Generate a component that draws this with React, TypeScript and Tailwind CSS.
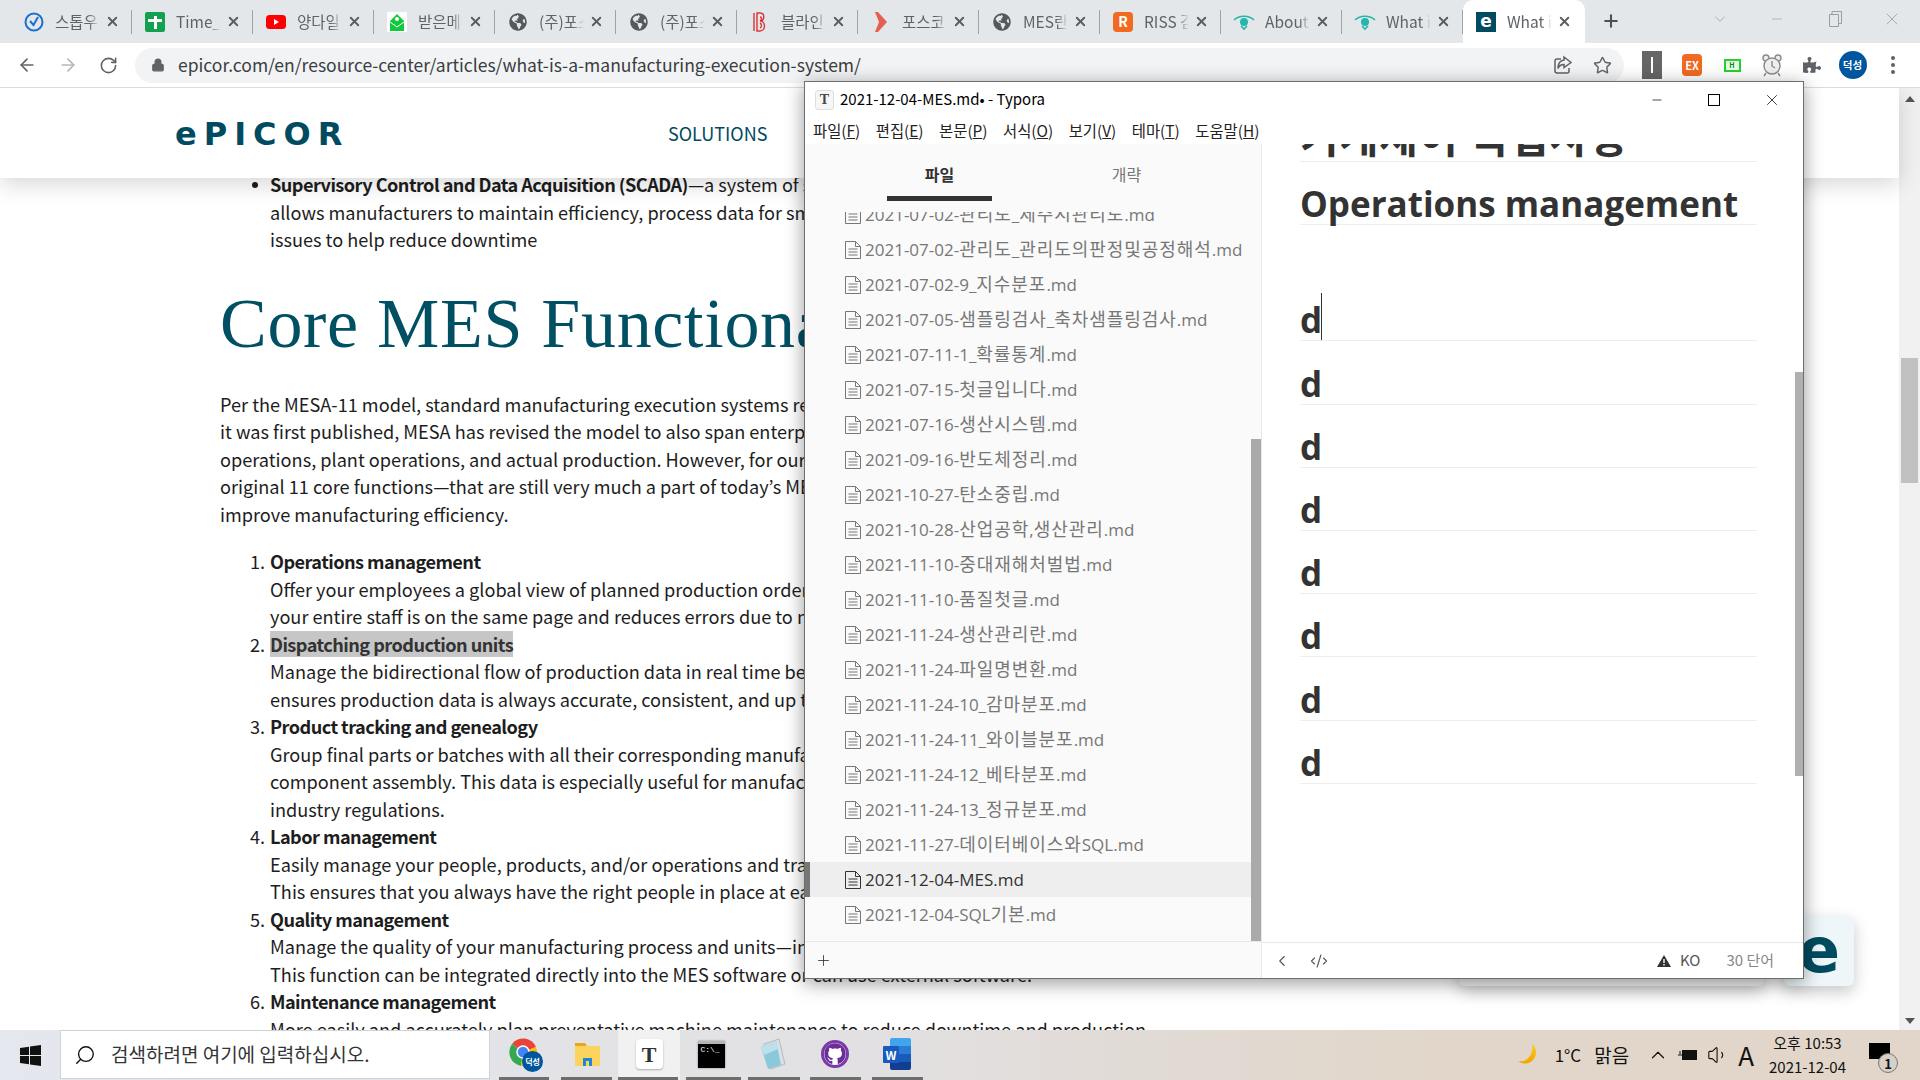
import React from 'react';
import {
  ArrowLeft,
  ArrowRight,
  RotateCw,
  Lock,
  Star,
  Plus,
  X,
  Minus,
  ChevronDown,
  ChevronUp,
  ChevronLeft,
  CodeXml,
  Volume1,
  Search,
} from 'lucide-react';
import { FaGlobeAmericas, FaGithub, FaPuzzlePiece } from 'react-icons/fa';

const bodyFont = "font-['Noto_Sans_CJK_KR','Noto_Sans',sans-serif]";

const CheckIcon = () => (
  <svg width="20" height="20" viewBox="0 0 20 20">
    <circle cx="10" cy="10" r="8.5" fill="none" stroke="#1a6fd0" strokeWidth="2" />
    <path d="M6 9l3.5 4L14 5" fill="none" stroke="#1a6fd0" strokeWidth="2" />
  </svg>
);
const TimeIcon = () => (
  <div className="relative w-5 h-5 rounded-[2px] bg-[#12a150]">
    <div className="absolute left-[9px] top-[4px] w-[3px] h-[13px] bg-white" />
    <div className="absolute left-[3px] top-[7px] w-[14px] h-[3px] bg-white" />
  </div>
);
const YoutubeIcon = () => (
  <svg width="20" height="20" viewBox="0 0 20 20">
    <rect y="3" width="20" height="14" rx="3.5" fill="#f00" />
    <path d="M8 7l5 3-5 3z" fill="#fff" />
  </svg>
);
const MailIcon = () => (
  <svg width="20" height="20" viewBox="0 0 20 20">
    <rect width="20" height="20" fill="#fff" />
    <path d="M3 9l7-7 7 7v10H3z" fill="#12c83c" />
    <circle cx="10" cy="7" r="2" fill="#fff" />
    <path d="M3 10l7 5 7-5" fill="none" stroke="#fff" />
  </svg>
);
const GlobeIcon = () => <FaGlobeAmericas size={18} color="#55585c" />;
const BlindIcon = () => (
  <svg width="20" height="20" viewBox="0 0 20 20" fill="none" stroke="#d9343a" strokeWidth="1.4">
    <path d="M4 1v18M7 1h3c5 0 5 8 0 8 6 0 6 10 0 10H7zM7 1v18M10 5c2 0 2 3 0 4M10 11c2 1 2 4 0 5" />
  </svg>
);
const PoscoIcon = () => (
  <svg width="20" height="20" viewBox="0 0 20 20">
    <path d="M4 0h3l9 10-9 10H4l4-10z" fill="#e5604f" />
  </svg>
);
const RissIcon = () => (
  <div className={`flex w-5 h-5 items-center justify-center rounded-[4px] bg-[#f26a21] text-[14px] font-bold text-white ${bodyFont}`}>
    R
  </div>
);
const EyeIcon = () => (
  <svg width="22" height="20" viewBox="0 0 22 20" fill="none" stroke="#26b5ad" strokeWidth="1.6">
    <path d="M1 8c5-5 15-5 20 0" />
    <circle cx="11" cy="10" r="3.2" fill="#26b5ad" />
    <path d="M8 14l3 3 3-3" />
  </svg>
);
const EpicorIcon = () => (
  <div className="flex w-5 h-5 items-center justify-center bg-[#004b5f] font-['DejaVu_Sans',sans-serif] text-[17px] font-bold leading-none text-white">
    e
  </div>
);

const tabs = [
  { icon: <CheckIcon />, title: '스톱우치' },
  { icon: <TimeIcon />, title: 'Time_Table' },
  { icon: <YoutubeIcon />, title: '양다일 노래' },
  { icon: <MailIcon />, title: '받은메일함' },
  { icon: <GlobeIcon />, title: '(주)포스코' },
  { icon: <GlobeIcon />, title: '(주)포스코' },
  { icon: <BlindIcon />, title: '블라인드' },
  { icon: <PoscoIcon />, title: '포스코 채용' },
  { icon: <GlobeIcon />, title: 'MES란 무엇' },
  { icon: <RissIcon />, title: 'RISS 검색' },
  { icon: <EyeIcon />, title: 'About MES' },
  { icon: <EyeIcon />, title: 'What is MES' },
];

const Tab = ({ icon, title }: { icon: React.ReactNode; title: string }) => (
  <div className="relative flex h-[43px] w-[121px] shrink-0 items-center pl-[12px]">
    <div className="flex w-[22px] justify-center">{icon}</div>
    <div className={`ml-[10px] w-[45px] overflow-hidden whitespace-nowrap text-[15.5px] text-[#5f6368] [mask-image:linear-gradient(to_right,black_75%,transparent)] ${bodyFont}`}>
      {title}
    </div>
    <X size={15} strokeWidth={3} className="ml-[5px] text-[#5a5d61]" />
    <div className="absolute right-0 top-[10px] h-[24px] w-px bg-[#a0a4a8]" />
  </div>
);

const Browser = () => (
  <div className="flex h-[88px] flex-col">
    <div className="flex h-[43px] items-start bg-[#e4e7ea] pl-[11px]">
      {tabs.map((t, i) => (
        <Tab key={i} icon={t.icon} title={t.title} />
      ))}
      <div className="flex h-[43px] w-[122px] shrink-0 items-center rounded-t-[10px] bg-white pl-[12px]">
        <div className="flex w-[22px] justify-center">
          <EpicorIcon />
        </div>
        <div className={`ml-[10px] w-[45px] overflow-hidden whitespace-nowrap text-[15.5px] text-[#5f6368] [mask-image:linear-gradient(to_right,black_75%,transparent)] ${bodyFont}`}>
          What is a
        </div>
        <X size={15} strokeWidth={3} className="ml-[5px] text-[#5a5d61]" />
      </div>
      <Plus size={20} strokeWidth={2.5} className="ml-[16px] mt-[11px] text-[#4d5054]" />
      <div className="ml-auto flex h-[38px] items-center text-[#9a9ea2]">
        <ChevronDown size={18} strokeWidth={1} />
        <Minus size={16} strokeWidth={1} className="ml-[40px]" />
        <svg width="14" height="16" viewBox="0 0 14 16" fill="none" stroke="currentColor" className="ml-[43px]">
          <path d="M1.5 3.5h9v12h-9zM4 3V.5h9.5v12H11" />
        </svg>
        <X size={20} strokeWidth={1} className="ml-[40px] mr-[18px]" />
      </div>
    </div>
    <div className="flex h-[45px] items-center border-b border-[#dadce0] bg-white">
      <ArrowLeft size={20} className="ml-[17px] text-[#5f6368]" />
      <ArrowRight size={20} className="ml-[21px] text-[#b5b8bb]" />
      <RotateCw size={19} className="ml-[21px] text-[#5f6368]" />
      <div className="ml-[17px] flex h-[35px] w-[1489px] items-center rounded-full bg-[#f1f3f4] pl-[16px]">
        <Lock size={14} fill="#5f6368" className="text-[#5f6368]" />
        <span className={`ml-[13px] text-[17.5px] text-[#3a3d41] ${bodyFont}`}>
          epicor.com/en/resource-center/articles/what-is-a-manufacturing-execution-system/
        </span>
        <svg width="20" height="20" viewBox="0 0 20 20" fill="none" stroke="#5f6368" strokeWidth="1.5" className="ml-auto">
          <path d="M8 4H4a2 2 0 0 0-2 2v10a2 2 0 0 0 2 2h10a2 2 0 0 0 2-2v-3" />
          <path d="M11 2l7 5.5-7 5v-3c-3 0-5 1.5-6 4 0-5 2-8 6-8.5z" />
        </svg>
        <Star size={19} strokeWidth={1.8} className="ml-[20px] mr-[12px] text-[#5f6368]" />
      </div>
      <div className="ml-[8px] flex items-center">
        <div className="flex w-[40px] justify-center">
          <div className="flex h-[28px] w-[20px] items-center justify-center bg-[#666]">
            <div className="h-[16px] w-[2px] bg-white" />
          </div>
        </div>
        <div className="flex w-[40px] justify-center">
          <div className={`flex h-[22px] w-[20px] items-center justify-center rounded-[4px] bg-[#f26a21] text-[11px] font-bold text-white ${bodyFont}`}>
            EX
          </div>
        </div>
        <div className="flex w-[40px] justify-center">
          <div className={`flex h-[13px] w-[17px] items-center justify-center border-2 border-[#21d32c] bg-[#eaffea] text-[7px] font-bold text-[#0a8a12] ${bodyFont}`}>
            H
          </div>
        </div>
        <div className="flex w-[40px] justify-center">
          <svg width="20" height="24" viewBox="0 0 20 24" fill="#eee" stroke="#8a8a8a" strokeWidth="1.4">
            <circle cx="4" cy="5" r="3" />
            <circle cx="16" cy="5" r="3" />
            <circle cx="10" cy="13" r="8" />
            <path d="M10 8v5l3 2M4 20l-2 3M16 20l2 3" fill="none" />
          </svg>
        </div>
        <div className="flex w-[40px] justify-center">
          <FaPuzzlePiece size={18} className="text-[#5f6368]" />
        </div>
        <div className="flex w-[41px] justify-center">
          <div className={`flex h-[28px] w-[28px] items-center justify-center rounded-full bg-[#00559f] text-[10.5px] font-bold text-white ${bodyFont}`}>
            덕성
          </div>
        </div>
        <div className="flex w-[40px] flex-col items-center gap-[3px]">
          <div className="h-[4px] w-[4px] rounded-full bg-[#5f6368]" />
          <div className="h-[4px] w-[4px] rounded-full bg-[#5f6368]" />
          <div className="h-[4px] w-[4px] rounded-full bg-[#5f6368]" />
        </div>
      </div>
    </div>
  </div>
);

const introLines = [
  'Per the MESA-11 model, standard manufacturing execution systems revolve around 11 core functions. In the years since',
  'it was first published, MESA has revised the model to also span enterprise-level business planning, manufacturing',
  'operations, plant operations, and actual production. However, for our purposes, we will look at MESA-11—the',
  'original 11 core functions—that are still very much a part of today’s MES and continue to help manufacturers',
  'improve manufacturing efficiency.',
];

const functions = [
  {
    title: 'Operations management',
    lines: [
      'Offer your employees a global view of planned production orders and their status. This ensures',
      'your entire staff is on the same page and reduces errors due to miscommunication.',
    ],
  },
  {
    title: 'Dispatching production units',
    mark: true,
    lines: [
      'Manage the bidirectional flow of production data in real time between machines. This',
      'ensures production data is always accurate, consistent, and up to date.',
    ],
  },
  {
    title: 'Product tracking and genealogy',
    lines: [
      'Group final parts or batches with all their corresponding manufacturing data, from raw material to',
      'component assembly. This data is especially useful for manufacturers that must comply with',
      'industry regulations.',
    ],
  },
  {
    title: 'Labor management',
    lines: [
      'Easily manage your people, products, and/or operations and track their qualifications.',
      'This ensures that you always have the right people in place at each work center.',
    ],
  },
  {
    title: 'Quality management',
    lines: [
      'Manage the quality of your manufacturing process and units—in real time or after the fact.',
      'This function can be integrated directly into the MES software or can use external software.',
    ],
  },
  {
    title: 'Maintenance management',
    lines: ['More easily and accurately plan preventative machine maintenance to reduce downtime and production'],
  },
];

const Article = () => (
  <div className={`flex-1 overflow-hidden pl-[220px] pt-[83px] text-[18.15px] leading-[27.5px] text-[#1d1d1d] whitespace-nowrap ${bodyFont}`}>
    <div className="relative pl-[50px]">
      <div className="absolute left-[32px] top-[11px] h-[6px] w-[6px] rounded-full bg-[#1d1d1d]" />
      <div>
        <b className="font-bold tracking-[-0.55px]">Supervisory Control and Data Acquisition (SCADA)</b>—a system of software and hardware that
      </div>
      <div>allows manufacturers to maintain efficiency, process data for smarter decisions, and communicate system</div>
      <div>issues to help reduce downtime</div>
    </div>
    <h2 className="mb-[25px] mt-[28px] font-['Liberation_Serif',serif] text-[70px] font-normal leading-[84px] tracking-[0.7px] text-[#004f63]">
      Core MES Functionality
    </h2>
    {introLines.map((l) => (
      <div key={l}>{l}</div>
    ))}
    <div className="mt-[20px]">
      {functions.map((f, i) => (
        <div key={f.title} className="relative pl-[50px]">
          <span className="absolute left-[30px] top-0">{i + 1}.</span>
          <div>
            <b className={`font-bold tracking-[-0.55px] ${f.mark ? 'bg-[#c6c6c6] text-[#333]' : ''}`}>{f.title}</b>
          </div>
          {f.lines.map((l) => (
            <div key={l}>{l}</div>
          ))}
        </div>
      ))}
    </div>
  </div>
);

const Page = () => (
  <div className="relative flex h-[942px] overflow-hidden bg-white">
    <div className="absolute left-0 right-[21px] top-0 z-10 flex h-[90px] items-center bg-white pl-[175px] shadow-[0_6px_22px_rgba(0,0,0,0.16)]">
      <span className="w-[493px] pt-[2px] font-['DejaVu_Sans',sans-serif] text-[32px] font-bold leading-none tracking-[7px] text-[#004b5f]">
        ePICOR
      </span>
      <span className={`text-[18px] text-[#004b5f] ${bodyFont}`}>SOLUTIONS</span>
    </div>
    <Article />
    <div className="flex w-[21px] flex-col items-center bg-[#f1f1f1] pt-[8px] pb-[6px]">
      <div className="h-0 w-0 border-x-[5px] border-b-[6px] border-x-transparent border-b-[#555]" />
      <div className="mt-[256px] h-[125px] w-[17px] bg-[#c1c1c1]" />
      <div className="mt-auto h-0 w-0 border-x-[5px] border-t-[6px] border-x-transparent border-t-[#555]" />
    </div>
    <div className="absolute left-[1459px] top-[828px] h-[70px] w-[305px] rounded-[6px] bg-[#f0f0f0] shadow-[0_6px_16px_rgba(0,0,0,0.22)]" />
    <div className="absolute left-[1784px] top-[828px] flex h-[70px] w-[70px] items-center justify-center rounded-[6px] bg-[#eef6f9] shadow-[0_6px_16px_rgba(0,0,0,0.22)]">
      <span className="font-['DejaVu_Sans',sans-serif] text-[62px] font-bold leading-none text-[#004b5f]">e</span>
    </div>
  </div>
);

const files = [
  '2021-07-02-관리도_관리도의판정및공정해석.md',
  '2021-07-02-9_지수분포.md',
  '2021-07-05-샘플링검사_축차샘플링검사.md',
  '2021-07-11-1_확률통계.md',
  '2021-07-15-첫글입니다.md',
  '2021-07-16-생산시스템.md',
  '2021-09-16-반도체정리.md',
  '2021-10-27-탄소중립.md',
  '2021-10-28-산업공학,생산관리.md',
  '2021-11-10-중대재해처벌법.md',
  '2021-11-10-품질첫글.md',
  '2021-11-24-생산관리란.md',
  '2021-11-24-파일명변환.md',
  '2021-11-24-10_감마분포.md',
  '2021-11-24-11_와이블분포.md',
  '2021-11-24-12_베타분포.md',
  '2021-11-24-13_정규분포.md',
  '2021-11-27-데이터베이스와SQL.md',
  '2021-12-04-MES.md',
  '2021-12-04-SQL기본.md',
];

const FileIcon = ({ active }: { active?: boolean }) => (
  <svg width="16" height="18" viewBox="0 0 16 18" fill="none" stroke={active ? '#333' : '#777'} className="shrink-0">
    <path d="M.5.5h10l5 5v12H.5z" />
    <path d="M10.5.5v5h5M3.5 8h9M3.5 11h9M3.5 14h9" />
  </svg>
);

// hangul in the reference is wider than Noto's, so those runs get their own size
const FileName = ({ name }: { name: string }) => (
  <span className="whitespace-nowrap">
    {name.split(/([가-힣]+)/).map((part, i) =>
      i % 2 === 1 ? (
        <span key={i} className="text-[18px] tracking-[0.95px]">
          {part}
        </span>
      ) : (
        part
      ),
    )}
  </span>
);

const FileRow = ({ name, active }: { name: string; active?: boolean }) => (
  <div className={`relative flex h-[35px] items-center gap-[4px] pl-[40px] ${active ? 'bg-[#eeeeee] text-[#333]' : 'text-[#777]'}`}>
    {active && <div className="absolute left-0 top-0 h-full w-[5px] bg-[#777]" />}
    <FileIcon active={active} />
    <FileName name={name} />
  </div>
);

const menus: [string, string][] = [
  ['파일', 'F'],
  ['편집', 'E'],
  ['본문', 'P'],
  ['서식', 'O'],
  ['보기', 'V'],
  ['테마', 'T'],
  ['도움말', 'H'],
];

const Heading = ({ children, caret }: { children: string; caret?: boolean }) => (
  <div className="relative flex h-[63.2px] items-end border-b border-[#eeeeee] text-[35px] font-bold leading-[40px]">
    <span>{children}</span>
    {caret && <div className="absolute left-[21px] bottom-0 h-[47px] w-px bg-[#333]" />}
  </div>
);

const Typora = () => (
  <div className="absolute left-[804px] top-[81px] z-20 flex h-[898px] w-[1000px] flex-col border border-[#6e6e6e] bg-white shadow-[0_4px_18px_rgba(0,0,0,0.4)]">
    <div className={`flex h-[33px] shrink-0 items-center pt-[2px] text-[15px] text-black ${bodyFont}`}>
      <div className="ml-[10px] flex h-[20px] w-[19px] items-center justify-center rounded-[3px] border border-[#ddd] bg-[#f6f6f6] font-['Liberation_Serif',serif] text-[14px] font-bold text-[#444]">
        T
      </div>
      <span className="ml-[6px]">2021-12-04-MES.md• - Typora</span>
      <Minus size={14} strokeWidth={1.2} className="ml-auto" />
      <div className="ml-[44px] h-[12px] w-[12px] border border-black" />
      <X size={18} strokeWidth={1} className="ml-[43px] mr-[22px]" />
    </div>
    <div className={`flex h-[29px] shrink-0 items-center gap-[15.5px] pl-[8px] pt-[2px] text-[15.4px] text-[#222] ${bodyFont}`}>
      {menus.map(([name, key]) => (
        <span key={key}>
          {name}(<u>{key}</u>)
        </span>
      ))}
    </div>
    <div className="flex min-h-0 flex-1">
      <div className="flex w-[457px] shrink-0 flex-col border-r border-[#e8e8e8] bg-[#fafafa] font-['Open_Sans','Noto_Sans_CJK_KR',sans-serif]">
        <div className={`flex h-[57px] shrink-0 text-[16px] ${bodyFont}`}>
          <div className="ml-[82px] flex w-[105px] flex-col items-center border-b-[5px] border-[#333] pt-[18px] font-bold text-[#333]">파일</div>
          <div className="flex flex-1 justify-center pt-[18px] text-[#777]">개략</div>
        </div>
        <div className="relative mt-[11px] min-h-0 flex-1 overflow-hidden border-b border-[#e8e8e8] text-[17px]">
          <div className="-mt-[15px] pr-[10px]">
            <FileRow name="2021-07-02-관리도_제주시관리도.md" />
            {files.map((f) => (
              <FileRow key={f} name={f} active={f === '2021-12-04-MES.md'} />
            ))}
          </div>
          <div className="absolute right-0 top-[227px] bottom-0 w-[10px] bg-[#aaaaaa]" />
        </div>
        <div className="flex h-[36px] shrink-0 items-center pl-[10px]">
          <Plus size={17} strokeWidth={1.2} className="text-[#333]" />
        </div>
      </div>
      <div className="relative flex min-w-0 flex-1 flex-col">
        <div className="relative min-h-0 flex-1 overflow-hidden pl-[38px] pr-[46px] font-['Open_Sans','Noto_Sans_CJK_KR',sans-serif] text-[#333]">
          <div className="flex h-[18px] items-end overflow-hidden border-b border-[#eeeeee] pb-[2px] text-[42px] font-bold leading-[44px] tracking-[1px] whitespace-nowrap">
            <span className="shrink-0">기계제어 독립사항</span>
          </div>
          <Heading>Operations management</Heading>
          <div className="h-[53px]" />
          <Heading caret>d</Heading>
          {[0, 1, 2, 3, 4, 5, 6].map((i) => (
            <Heading key={i}>d</Heading>
          ))}
          <div className="absolute right-0 top-[228px] h-[404px] w-[8px] bg-[#b0b0b0]" />
        </div>
        <div className={`flex h-[36px] shrink-0 items-center border-t border-[#e8e8e8] text-[15px] ${bodyFont}`}>
          <ChevronLeft size={18} strokeWidth={1.5} className="ml-[11px] text-[#555]" />
          <CodeXml size={18} strokeWidth={1.5} className="ml-[19px] text-[#555]" />
          <svg width="14" height="12" viewBox="0 0 14 12" className="ml-auto">
            <path d="M7 0l7 12H0z" fill="#333" />
            <path d="M7 4v4M7 9v1.5" stroke="#fff" strokeWidth="1.4" />
          </svg>
          <span className="ml-[9px] text-[#555]">KO</span>
          <span className="ml-[26px] mr-[29px] text-[#888]">30 단어</span>
        </div>
      </div>
    </div>
  </div>
);

const WindowsLogo = () => (
  <svg width="21" height="21" viewBox="0 0 21 21" fill="#111">
    <path d="M0 3l9-1.3V10H0zM10 1.5L21 0v10H10zM0 11h9v8.3L0 18zM10 11h11v10l-11-1.5z" />
  </svg>
);

const ChromeIcon = () => (
  <div className="relative h-[32px] w-[32px]">
    <svg width="28" height="28" viewBox="0 0 28 28" className="absolute left-0 top-0">
      <path d="M14 14L3 6A14 14 0 0 1 27 9z" fill="#e8443a" />
      <path d="M14 14L3 6A14 14 0 0 0 12 28z" fill="#34a853" />
      <path d="M14 14l13-5a14 14 0 0 1-15 19z" fill="#fbbc05" />
      <circle cx="14" cy="14" r="6" fill="#4285f4" stroke="#fff" strokeWidth="1.5" />
    </svg>
    <div className={`absolute -right-[2px] -bottom-[2px] flex h-[21px] w-[21px] items-center justify-center rounded-full bg-[#00559f] text-[8px] font-bold text-white ${bodyFont}`}>
      덕성
    </div>
  </div>
);

const FolderIcon = () => (
  <svg width="27" height="26" viewBox="0 0 27 26">
    <path d="M1 2h10l2 3H1z" fill="#e6a817" />
    <rect x="1" y="5" width="25" height="20" rx="1" fill="#fcd35d" />
    <path d="M9 25v-8h9v8h-3v-5h-3v5z" fill="#1e88d8" />
  </svg>
);

const TyporaIcon = () => (
  <div className="flex h-[30px] w-[27px] items-center justify-center rounded-[4px] bg-white font-['Liberation_Serif',serif] text-[22px] font-bold text-[#333] shadow-[0_1px_2px_rgba(0,0,0,0.3)]">
    T
  </div>
);

const TerminalIcon = () => (
  <div className="h-[27px] w-[27px] border-t-[3px] border-[#b5b5b5] bg-black pl-[3px] pt-[2px] font-['Liberation_Mono',monospace] text-[8px] leading-none text-white shadow-[0_0_2px_rgba(0,0,0,0.4)]">
    C:\_
  </div>
);

const NotepadIcon = () => (
  <svg width="28" height="32" viewBox="0 0 28 32">
    <path d="M5 6l15-5 6 25-14 5z" fill="#d8dfe6" stroke="#98a2aa" strokeWidth="0.6" />
    <path d="M2 9l15-6 5 24-13 4z" fill="#8cc8dc" />
    <path d="M2 9l15-6 2 8-14 6z" fill="#bde0ea" />
  </svg>
);

const GithubIcon = () => (
  <div className="flex h-[28px] w-[28px] items-center justify-center rounded-full border-[3px] border-[#7a3aa8] bg-white">
    <FaGithub size={22} color="#6b2d9a" />
  </div>
);

const WordIcon = () => (
  <div className="relative h-[32px] w-[28px]">
    <div className="absolute right-0 top-0 flex h-[32px] w-[21px] flex-col overflow-hidden rounded-[2px]">
      <div className="flex-1 bg-[#41a5ee]" />
      <div className="flex-1 bg-[#2b7cd3]" />
      <div className="flex-1 bg-[#185abd]" />
      <div className="flex-1 bg-[#103f91]" />
    </div>
    <div className={`absolute left-0 top-[8px] flex h-[17px] w-[16px] items-center justify-center rounded-[1px] bg-[#185abd] text-[12px] font-bold text-white ${bodyFont}`}>
      W
    </div>
  </div>
);

const taskIcons = [
  { icon: <ChromeIcon />, bar: 'ml-[5px] w-[50px]' },
  { icon: <FolderIcon />, bar: 'ml-[5px] w-[51px]' },
  { icon: <TyporaIcon />, bar: 'ml-0 w-[60px]', active: true },
  { icon: <TerminalIcon />, bar: 'ml-[6px] w-[55px]' },
  { icon: <NotepadIcon />, bar: 'ml-[6px] w-[52px]' },
  { icon: <GithubIcon />, bar: 'ml-[6px] w-[51px]' },
  { icon: <WordIcon />, bar: 'ml-[6px] w-[51px]' },
];

const Taskbar = () => (
  <div className={`flex h-[50px] items-stretch bg-[linear-gradient(to_right,#e4e8ee,#e2e0e2_45%,#e1d6c9_75%)] text-[#111] ${bodyFont}`}>
    <div className="flex w-[60px] items-center justify-center">
      <WindowsLogo />
    </div>
    <div className="mr-[4px] flex h-[49px] w-[430px] items-center border border-[#cfd2d6] bg-white pl-[13px] text-[19px] text-[#333]">
      <Search size={22} strokeWidth={1.5} className="-scale-x-100 text-[#111]" />
      <span className="ml-[15px]">검색하려면 여기에 입력하십시오.</span>
    </div>
    {taskIcons.map((t, i) => (
      <div key={i} className={`relative flex w-[62px] items-center justify-center pb-[2px] ${t.active ? 'bg-[#f1f1f1]' : ''}`}>
        {t.icon}
        <div className={`absolute bottom-0 left-0 h-[3px] bg-[#6d6d6d] ${t.bar}`} />
      </div>
    ))}
    <div className="ml-auto flex items-center pr-[30px]">
      <svg width="24" height="24" viewBox="0 0 24 24">
        <defs>
          <linearGradient id="moon" x1="0" y1="0" x2="0" y2="1">
            <stop offset="0" stopColor="#f7d21a" />
            <stop offset="1" stopColor="#f5a200" />
          </linearGradient>
        </defs>
        <path d="M15 1a11 11 0 1 1-14 17c8 2 16-6 14-17z" fill="url(#moon)" />
      </svg>
      <span className="ml-[14px] text-[17px]">1°C</span>
      <span className="ml-[13px] text-[19px]">맑음</span>
      <ChevronUp size={22} strokeWidth={1.3} className="ml-[18px]" />
      <svg width="20" height="14" viewBox="0 0 20 14" className="ml-[9px]">
        <rect x="4" y="2" width="15" height="10" fill="#111" />
        <path d="M0 7h4M2 3v3" stroke="#111" />
      </svg>
      <Volume1 size={22} strokeWidth={1.2} className="ml-[9px]" />
      <span className="ml-[9px] text-[26px] leading-none">A</span>
      <div className="ml-[15px] flex flex-col items-center text-[15px] leading-[24px]">
        <span>오후 10:53</span>
        <span>2021-12-04</span>
      </div>
      <div className="relative ml-[23px] h-[24px] w-[21px]">
        <div className="h-[16px] w-[21px] bg-black" />
        <div className="absolute left-[9px] top-[10px] flex h-[20px] w-[20px] items-center justify-center rounded-full border border-[#777] bg-[#d8d0c6] text-[13px] font-bold leading-none">
          1
        </div>
      </div>
    </div>
  </div>
);

export default function App() {
  return (
    <div className="relative h-[1080px] w-[1920px] overflow-hidden bg-white">
      <Browser />
      <Page />
      <Typora />
      <Taskbar />
    </div>
  );
}
